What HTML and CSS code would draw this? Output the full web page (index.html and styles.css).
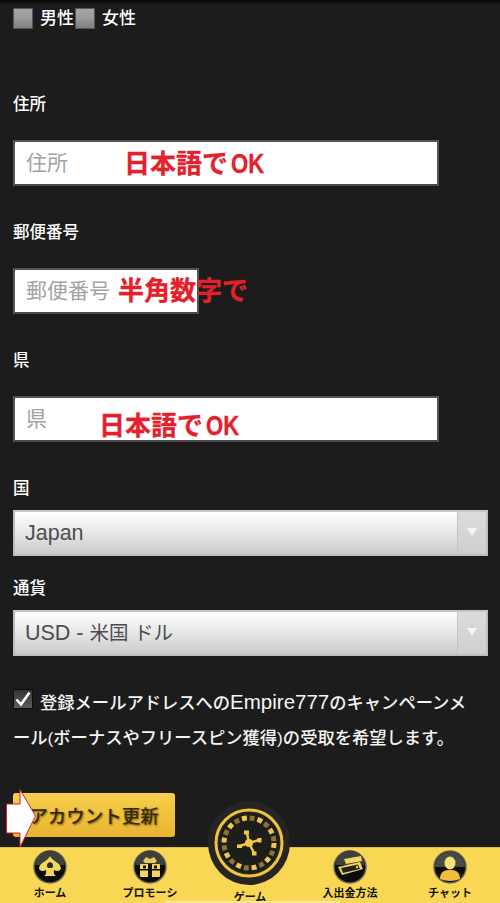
FILE: index.html
```html
<!DOCTYPE html>
<html lang="ja">
<head>
<meta charset="utf-8">
<title>アカウント更新</title>
<link rel="stylesheet" href="styles.css">
</head>
<body>
<div class="page">
  <div class="topshade"></div>
  <main class="form">
    <div class="gender">
      <span class="radio"></span><span class="gender-label">男性</span>
      <span class="radio"></span><span class="gender-label">女性</span>
    </div>

    <label class="label label-first">住所</label>
    <div class="field field-wide">
      <div class="input">住所</div>
      <span class="note note-a">日本語で<span class="note-latin">OK</span></span>
    </div>

    <label class="label">郵便番号</label>
    <div class="field field-short">
      <div class="input">郵便番号</div>
      <span class="note note-b">半角数字で</span>
    </div>

    <label class="label">県</label>
    <div class="field field-wide">
      <div class="input">県</div>
      <span class="note note-c">日本語で<span class="note-latin">OK</span></span>
    </div>

    <label class="label">国</label>
    <div class="select">
      <span class="select-value">Japan</span>
      <span class="select-arrow"><i class="tri"></i></span>
    </div>

    <label class="label label-cur">通貨</label>
    <div class="select">
      <span class="select-value">USD - <span class="select-cjk">米国 ドル</span></span>
      <span class="select-arrow"><i class="tri"></i></span>
    </div>

    <div class="consent">
      <span class="check">
        <svg viewBox="0 0 20 20" width="20" height="20"><path d="M3.5 10.5 L8 15.5 L16.5 3.5" fill="none" stroke="#fff" stroke-width="2.6"/></svg>
      </span>
      <p class="consent-text"><span class="consent-indent"></span>登録メールアドレスへの<span class="consent-latin">Empire777</span>のキャンペーンメ<br>ール(ボーナスやフリースピン獲得)の受取を希望します。</p>
    </div>

    <div class="btn-wrap">
      <button class="btn" type="button">アカウント更新</button>
      <svg class="arrow" viewBox="0 0 31 59" width="31" height="59"><path d="M0.5 15 H14 V0.5 L29.5 27 L14 58 V44 H0.5 Z" fill="#fff" stroke="#d4202a" stroke-width="1"/></svg>
    </div>
  </main>

  <nav class="nav">
    <div class="nav-item">
      <span class="ico">
        <svg viewBox="0 0 34 34" width="34" height="34"><circle cx="17" cy="17" r="16" fill="#0c0c0c" stroke="#6b6753" stroke-width="1.5"/><path d="M2.5 15a14.5 14.5 0 0 1 29 0z" fill="#3f3f3c"/><path d="M17 6 C19 11 27 12 28 18 C28 21 24 22 21 20 C20.5 23 21 25 23 26 H11 C13 25 13.5 23 13 20 C10 22 6 21 6 18 C7 12 15 11 17 6Z" fill="#f2d75c"/><path d="M17 12 C20 13 21 16 19 18 H15 C13 16 14 13 17 12Z" fill="#2b2a22"/></svg>
      </span>
      <span class="nav-text">ホーム</span>
    </div>
    <div class="nav-item">
      <span class="ico">
        <svg viewBox="0 0 34 34" width="34" height="34"><circle cx="17" cy="17" r="16" fill="#0c0c0c" stroke="#6b6753" stroke-width="1.5"/><path d="M2.5 15a14.5 14.5 0 0 1 29 0z" fill="#3f3f3c"/><path d="M10 11 L13 7 L17 9 L21 7 L24 11 L22 13 H12Z" fill="#e9cc55"/><rect x="7" y="14" width="20" height="13" rx="1" fill="#f2d75c"/><rect x="15" y="14" width="4" height="13" fill="#111"/><rect x="7" y="19" width="20" height="1.5" fill="#111"/><rect x="10" y="15.5" width="3" height="3" fill="#111"/><rect x="21" y="15.5" width="3" height="3" fill="#111"/></svg>
      </span>
      <span class="nav-text">プロモーシ</span>
    </div>
    <div class="nav-item nav-game">
      <span class="wheel">
        <svg viewBox="0 0 82 84" width="82" height="84">
          <ellipse cx="41" cy="42" rx="41" ry="42" fill="#262523"/>
          <circle cx="41" cy="42" r="33" fill="none" stroke="#efc33a" stroke-width="3"/>
          <circle cx="41" cy="42" r="30" fill="#1d1d1b"/>
          <circle cx="41" cy="42" r="25" fill="none" stroke="#edc84f" stroke-width="5" stroke-dasharray="5 10.7"/>
          <circle cx="41" cy="42" r="25" fill="none" stroke="#8a7430" stroke-width="5" stroke-dasharray="5 10.7" stroke-dashoffset="7.85"/>
          <path d="M41 42 L39 32 M41 42 L51 39 M41 42 L46 52 M41 42 L32 45" stroke="#f2c93f" stroke-width="2.4"/>
          <circle cx="41" cy="42" r="4" fill="#f2c93f"/>
          <rect x="36" y="29.5" width="5" height="4" fill="#f2c93f"/>
          <rect x="49.5" y="37" width="4" height="4.5" fill="#f2c93f"/>
          <rect x="44" y="50.5" width="4.5" height="4" fill="#f2c93f"/>
          <rect x="29" y="43.5" width="5" height="3.5" fill="#f2c93f"/>
        </svg>
      </span>
      <span class="nav-text">ゲーム</span>
    </div>
    <div class="nav-item">
      <span class="ico">
        <svg viewBox="0 0 34 34" width="34" height="34"><circle cx="17" cy="17" r="16" fill="#0c0c0c" stroke="#6b6753" stroke-width="1.5"/><path d="M2.5 15a14.5 14.5 0 0 1 29 0z" fill="#3f3f3c"/><path d="M11 9 L28 6 L29 11 L13 14Z" fill="#f2d75c"/><path d="M5 17 L27 12 L30 19 L9 25Z" fill="#f2d75c"/><path d="M8 18 L25 14.5 L27 19 L10 23Z" fill="#222"/><circle cx="24" cy="17" r="1.2" fill="#f2d75c"/></svg>
      </span>
      <span class="nav-text">入出金方法</span>
    </div>
    <div class="nav-item">
      <span class="ico">
        <svg viewBox="0 0 34 34" width="34" height="34"><circle cx="17" cy="17" r="16" fill="#0c0c0c" stroke="#6b6753" stroke-width="1.5"/><path d="M2 17a15 15 0 0 1 15-15a15 15 0 0 1 15 15z" fill="#4a4a46"/><ellipse cx="17" cy="13" rx="5.5" ry="6.5" fill="#f5e27c"/><path d="M7 29 C7 21 12 20 17 20 C22 20 27 21 27 29 Q17 33 7 29Z" fill="#eebd3a"/></svg>
      </span>
      <span class="nav-text">チャット</span>
    </div>
  </nav>
</div>
</body>
</html>
```
FILE: styles.css
```css
* { box-sizing: border-box; }
html, body { margin: 0; padding: 0; }
body {
  background: #1c1c1c;
  font-family: "Liberation Sans", "Noto Sans CJK JP", sans-serif;
  color: #fff;
}
.page {
  position: relative;
  width: 500px;
  height: 903px;
  overflow: hidden;
  background: #1c1c1c;
}
.topshade {
  position: absolute;
  left: 0; right: 0; top: 0;
  height: 5px;
  background: linear-gradient(#050505, #1c1c1c);
}
.form {
  padding: 8px 13px 0;
}
.gender {
  display: flex;
  align-items: center;
  height: 21px;
}
.radio {
  width: 20px;
  height: 21px;
  background: linear-gradient(#a5a5a5, #9a9a9a 50%, #7d7d7d);
  border: 1px solid #555;
}
.gender-label {
  width: 42px;
  padding-left: 7px;
  font-size: 17px;
  font-weight: 500;
  line-height: 21px;
  white-space: nowrap;
}
.label {
  display: block;
  height: 26px;
  margin-top: 33px;
  font-size: 16.5px;
  line-height: 26px;
  font-weight: 500;
}
.label-first { margin-top: 62px; }
.label-cur { margin-top: 19px; }
.field {
  position: relative;
  margin-top: 23px;
  height: 46px;
}
.field-wide { width: 426px; }
.field-short { width: 186px; }
.input {
  height: 46px;
  padding-left: 11px;
  background: #fff;
  border: 2px solid #555;
  border-bottom-color: #4a4a4a;
  color: #a3a3a3;
  font-size: 21px;
  line-height: 42px;
  white-space: nowrap;
}
.note {
  position: absolute;
  color: #e4202c;
  font-size: 26px;
  font-weight: 700;
  white-space: nowrap;
  line-height: 1;
  -webkit-text-stroke: 0.3px #e4202c;
}
.note-latin {
  display: inline-block;
  font-size: 28px;
  margin-left: 3px;
  transform: scaleX(0.79);
  transform-origin: left center;
}
.note-a { left: 111px; top: 10px; }
.note-b { left: 105px; top: 10px; }
.note-c { left: 86px; top: 16px; }
.select {
  display: flex;
  height: 46px;
  width: 475px;
  margin-top: 9px;
  border: 2px solid #bdbdbd;
  border-top-color: #c6c6c6;
  background: linear-gradient(#fff, #e6e6e6 50%, #cbcbcb);
}
.select-value {
  flex: 1;
  padding-left: 10px;
  font-size: 21.5px;
  line-height: 42px;
  color: #4d4d4d;
}
.select-cjk { font-size: 19.5px; }
.select-arrow {
  display: flex;
  align-items: center;
  justify-content: center;
  width: 29px;
  background: linear-gradient(#dcdcdc, #cfcfcf);
  border-left: 1px solid #c4c4c4;
}
.tri {
  display: block;
  width: 0;
  height: 0;
  margin-top: -3px;
  border-left: 5px solid transparent;
  border-right: 5px solid transparent;
  border-top: 8px solid #f5f5f5;
}
.consent {
  position: relative;
  margin-top: 28px;
  width: 470px;
}
.check {
  position: absolute;
  left: 0;
  top: 5px;
  width: 20px;
  height: 20px;
  background: linear-gradient(#333, #5c5c5c);
  border: 1px solid #0e0e0e;
  display: flex;
}
.check svg { margin: -1px; flex: none; }
.consent-text {
  margin: 0;
  font-size: 17.3px;
  line-height: 35px;
  font-weight: 500;
  color: #f4f4f4;
  white-space: nowrap;
}
.consent-latin { font-size: 20.5px; }
.consent-indent {
  display: inline-block;
  width: 27px;
}
.btn-wrap {
  position: relative;
  margin-top: 37px;
  width: 162px;
  height: 44px;
}
.btn {
  display: block;
  width: 162px;
  height: 44px;
  padding: 0;
  border: 0;
  border-radius: 3px;
  background: linear-gradient(#f7cf4c, #e9b430);
  color: #3a2b08;
  font-family: "Liberation Sans", "Noto Sans CJK JP", sans-serif;
  font-size: 18.5px;
  font-weight: 500;
  text-shadow: 1px 1px 2px rgba(60, 40, 0, 0.7);
  white-space: nowrap;
}
.arrow {
  position: absolute;
  left: -7px;
  top: -4px;
}
.nav {
  position: absolute;
  left: 0;
  right: 0;
  bottom: 0;
  height: 56px;
  display: flex;
  background: #f9d654;
  border-top: 1px solid #e3bd3b;
}
.nav::after {
  content: "";
  position: absolute;
  left: 165px;
  width: 175px;
  bottom: 0;
  height: 2px;
  background: #fbe88c;
}
.nav-item {
  flex: 0 0 100px;
  display: flex;
  flex-direction: column;
  align-items: center;
  padding-top: 2px;
}
.ico {
  display: block;
  width: 34px;
  height: 34px;
}
.nav-text {
  display: block;
  margin-top: 2px;
  font-size: 11px;
  font-weight: 700;
  line-height: 14px;
  color: #111;
  white-space: nowrap;
}
.nav-game {
  position: relative;
}
.wheel {
  position: absolute;
  left: 8px;
  top: -47px;
  width: 82px;
  height: 84px;
}
.nav-game .nav-text {
  margin-top: 40px;
}
```
